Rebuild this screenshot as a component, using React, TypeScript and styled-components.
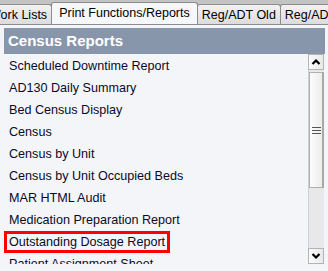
import styled, { createGlobalStyle } from "styled-components";

const GlobalStyle = createGlobalStyle`
	html, body {
		margin: 0;
		padding: 0;
		background: #f4f5f9;
	}
	* {
		box-sizing: border-box;
	}
`;

const REPORTS = [
	"Scheduled Downtime Report",
	"AD130 Daily Summary",
	"Bed Census Display",
	"Census",
	"Census by Unit",
	"Census by Unit Occupied Beds",
	"MAR HTML Audit",
	"Medication Preparation Report",
	"Outstanding Dosage Report",
	"Patient Assignment Sheet"
];

const Window = styled.div`
	width: 328px;
	height: 271px;
	overflow: hidden;
	background: #f4f5f9;
	font-family: "Liberation Sans", Arial, sans-serif;
	color: #000;
`;

const TabStrip = styled.div`
	display: flex;
	align-items: flex-end;
	height: 25px;
	background: #c3c3c3;
	border-bottom: 1px solid #8c8c8c;
	overflow: hidden;
	white-space: nowrap;
`;

const Tab = styled.div<{ $active?: boolean; $offset?: number }>`
	flex: none;
	margin-left: ${ ({ $offset }) => $offset ?? 0 }px;
	height: ${ ({ $active }) => $active ? 23 : 20 }px;
	margin-bottom: ${ ({ $active }) => $active ? -1 : 0 }px;
	padding: ${ ({ $active }) => $active ? "3px 7px 0" : "3px 4px 0" };
	font-size: 12.5px;
	line-height: 15px;
	border: 1px solid #8c8c8c;
	border-bottom: none;
	border-radius: 3px 3px 0 0;
	background: ${ ({ $active }) => $active
		? "#f6f7fa"
		: "linear-gradient(#f2f2f2, #dcdcdc)" };
	& + & {
		margin-left: -1px;
	}
`;

const Panel = styled.div`
	padding: 3px 3px 0 4px;
`;

const Header = styled.div`
	height: 26px;
	background: #8896ab;
	color: #fff;
	font-weight: bold;
	font-size: 15px;
	line-height: 26px;
	padding-left: 4px;
`;

const ListBox = styled.div`
	display: flex;
	height: 210px;
`;

const Items = styled.div`
	flex: 1;
	display: flex;
	flex-direction: column;
	align-items: flex-start;
	padding-top: 1px;
	overflow: hidden;
`;

const Item = styled.div<{ $selected?: boolean }>`
	flex: none;
	height: 22px;
	padding: 1px 2px 0;
	font-size: 12.6px;
	line-height: 15px;
	white-space: nowrap;
	border: 3px solid ${ ({ $selected }) => $selected ? "#ff0000" : "transparent" };
	color: #0a0a28;
`;

const ScrollBar = styled.div`
	width: 16px;
	margin-right: 1px;
	display: flex;
	flex-direction: column;
	background: #e8e8ea;
`;

const ArrowButton = styled.div`
	height: 16px;
	display: flex;
	align-items: center;
	justify-content: center;
	border: 1px solid #b4b4b4;
	background: linear-gradient(90deg, #fbfbfb, #e9e9e9);
`;

const Track = styled.div`
	flex: 1;
	padding-top: 2px;
	border-left: 1px solid #d0d0d0;
`;

const Thumb = styled.div`
	height: 116px;
	display: flex;
	align-items: center;
	justify-content: center;
	border: 1px solid #b0b0b0;
	border-right: 2px solid #a8a8a8;
	background: linear-gradient(90deg, #fdfdfd, #ececec);
`;

const Chevron = ({ up }: { up?: boolean }) => (
	<svg width="10" height="8" viewBox="0 0 10 8">
		<polyline
			points={ up ? "1.5,6 5,2.5 8.5,6" : "1.5,2 5,5.5 8.5,2" }
			fill="none"
			stroke="#000"
			strokeWidth="2.2" />
	</svg>
);

const Grip = () => (
	<svg width="9" height="7" viewBox="0 0 9 7">
		<rect x="0" y="0" width="9" height="1" fill="#555" />
		<rect x="0" y="3" width="9" height="1" fill="#555" />
		<rect x="0" y="6" width="9" height="1" fill="#555" />
	</svg>
);

export default function App() {
	return (
		<>
			<GlobalStyle />
			<Window>
				<TabStrip>
					<Tab $offset={ -16 }>Work Lists</Tab>
					<Tab $active>Print Functions/Reports</Tab>
					<Tab>Reg/ADT Old</Tab>
					<Tab>Reg/ADT New</Tab>
				</TabStrip>
				<Panel>
					<Header>Census Reports</Header>
					<ListBox>
						<Items>
							{ REPORTS.map(name => (
								<Item
									key={ name }
									$selected={ name === "Outstanding Dosage Report" }>
									{ name }
								</Item>
							)) }
						</Items>
						<ScrollBar>
							<ArrowButton><Chevron up /></ArrowButton>
							<Track>
								<Thumb><Grip /></Thumb>
							</Track>
							<ArrowButton><Chevron /></ArrowButton>
						</ScrollBar>
					</ListBox>
				</Panel>
			</Window>
		</>
	);
}
